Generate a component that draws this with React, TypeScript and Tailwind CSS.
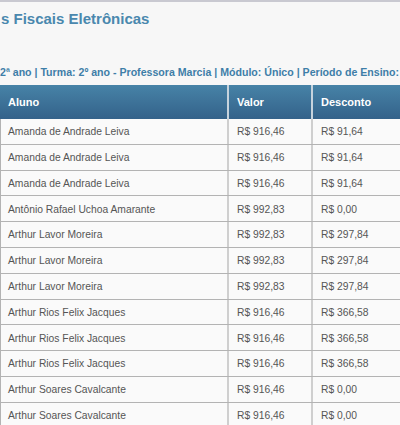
import React from 'react';

type Row = { aluno: string; valor: string; desconto: string };

const rows: Row[] = [
  { aluno: 'Amanda de Andrade Leiva', valor: 'R$ 916,46', desconto: 'R$ 91,64' },
  { aluno: 'Amanda de Andrade Leiva', valor: 'R$ 916,46', desconto: 'R$ 91,64' },
  { aluno: 'Amanda de Andrade Leiva', valor: 'R$ 916,46', desconto: 'R$ 91,64' },
  { aluno: 'Antônio Rafael Uchoa Amarante', valor: 'R$ 992,83', desconto: 'R$ 0,00' },
  { aluno: 'Arthur Lavor Moreira', valor: 'R$ 992,83', desconto: 'R$ 297,84' },
  { aluno: 'Arthur Lavor Moreira', valor: 'R$ 992,83', desconto: 'R$ 297,84' },
  { aluno: 'Arthur Lavor Moreira', valor: 'R$ 992,83', desconto: 'R$ 297,84' },
  { aluno: 'Arthur Rios Felix Jacques', valor: 'R$ 916,46', desconto: 'R$ 366,58' },
  { aluno: 'Arthur Rios Felix Jacques', valor: 'R$ 916,46', desconto: 'R$ 366,58' },
  { aluno: 'Arthur Rios Felix Jacques', valor: 'R$ 916,46', desconto: 'R$ 366,58' },
  { aluno: 'Arthur Soares Cavalcante', valor: 'R$ 916,46', desconto: 'R$ 0,00' },
  { aluno: 'Arthur Soares Cavalcante', valor: 'R$ 916,46', desconto: 'R$ 0,00' },
  { aluno: 'Arthur Soares Cavalcante', valor: 'R$ 916,46', desconto: 'R$ 0,00' },
];

const App: React.FC = () => {
  return (
    <div
      className="w-[400px] h-[425px] overflow-hidden bg-[#f7f7f7] border-t-2 border-[#c9c9d1]"
      style={{ fontFamily: '"Liberation Sans", Arial, sans-serif' }}
    >
      <h1 className="pl-px pt-[8px] h-[31px] text-[15px] leading-[18px] font-bold text-[#4a88ae] whitespace-nowrap">
        s Fiscais Eletrônicas
      </h1>

      <p className="mt-[32px] h-[16px] text-[10.6px] leading-[14px] font-bold text-[#3e7ea8] whitespace-nowrap">
        2ª ano | Turma: 2º ano - Professora Marcia | Módulo: Único | Período de Ensino: Março
      </p>

      <div className="mt-[4px] w-[460px]">
        <div className="flex h-[34px] bg-gradient-to-b from-[#4783a7] to-[#34628a] text-white text-[11px] font-bold">
          <div className="w-[229px] flex items-center pl-[8px] border-r-2 border-[#c6d3dd]">Aluno</div>
          <div className="w-[84px] flex items-center pl-[8px] border-r-2 border-[#c6d3dd]">Valor</div>
          <div className="flex-1 flex items-center pl-[8px]">Desconto</div>
        </div>
        {rows.map((r, i) => (
          <div
            key={i}
            className="flex h-[25.8px] bg-[#fafafa] border-b border-[#b3b3b3] border-l border-l-[#b3b3b3] text-[10.3px] text-[#555555]"
          >
            <div className="w-[228px] flex items-center pl-[7px] pt-px border-r-2 border-[#cfcfcf]">{r.aluno}</div>
            <div className="w-[84px] flex items-center pl-[8px] pt-px border-r-2 border-[#cfcfcf]">{r.valor}</div>
            <div className="flex-1 flex items-center pl-[8px] pt-px">{r.desconto}</div>
          </div>
        ))}
      </div>
    </div>
  );
};

export default App;
